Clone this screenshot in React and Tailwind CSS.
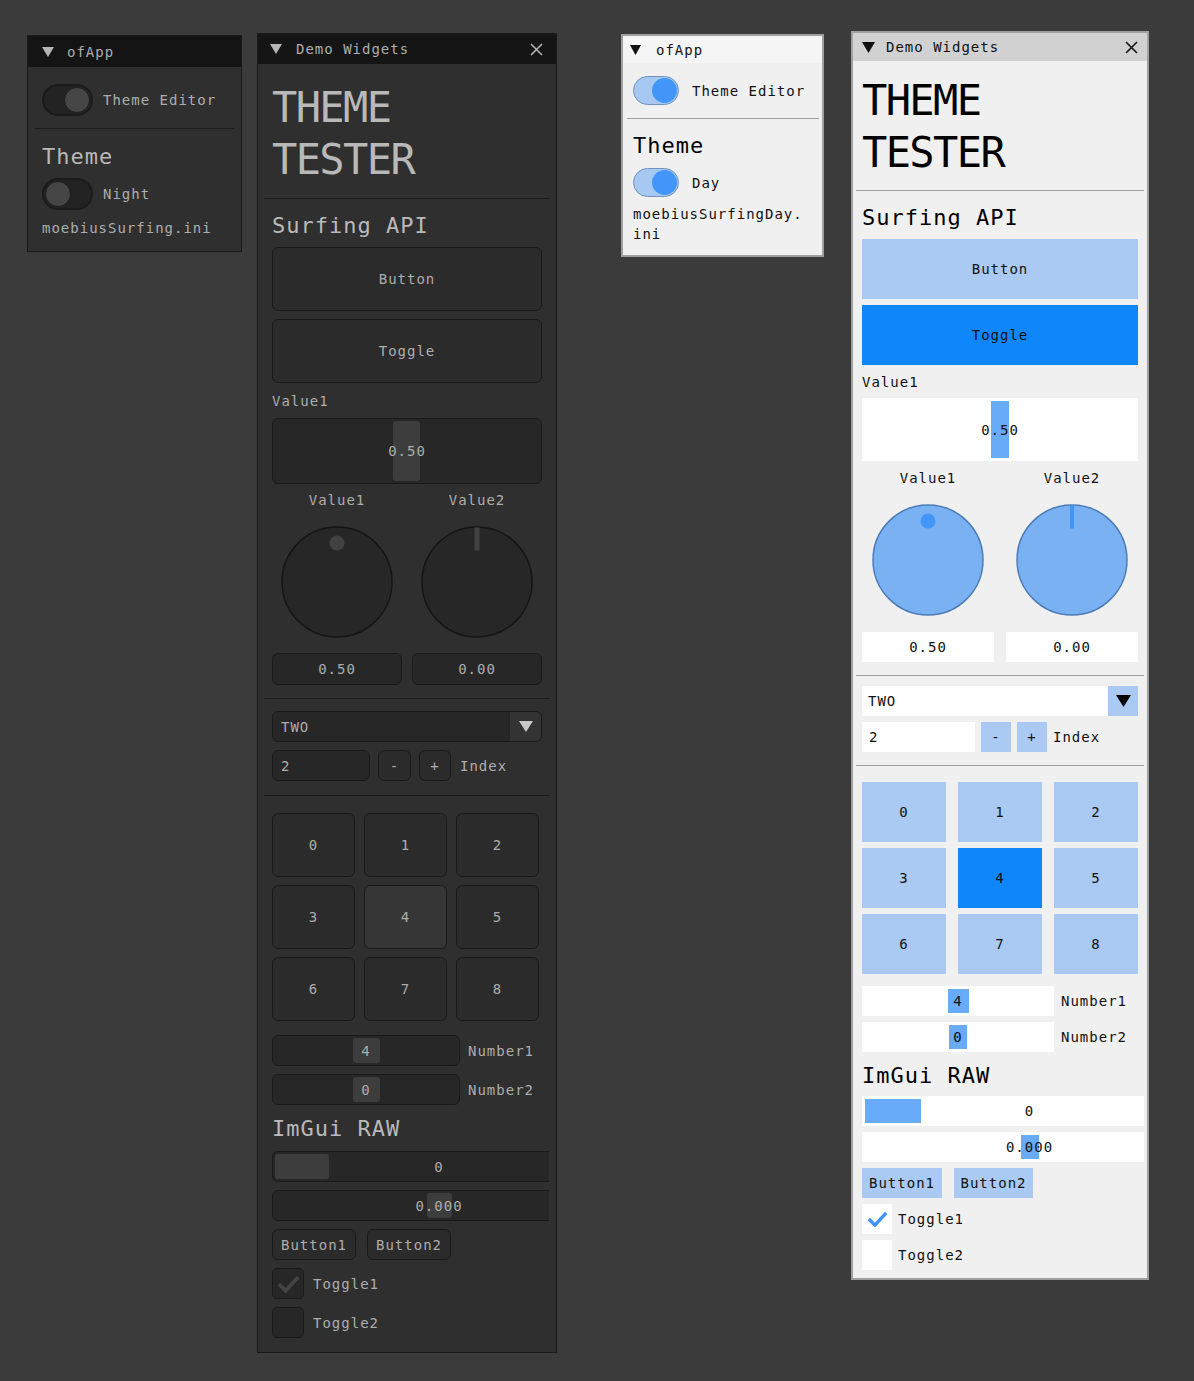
import React from "react";

const Tri = ({ w = 12, h = 10, color }) => (
  <svg width={w} height={h} viewBox="0 0 12 10" preserveAspectRatio="none" className="shrink-0">
    <path d="M0 0H12L6 10Z" fill={color} />
  </svg>
);

const CloseX = ({ color }) => (
  <svg width="13" height="13" viewBox="0 0 13 13" className="shrink-0">
    <path d="M1 1L12 12M12 1L1 12" stroke={color} strokeWidth="1.6" />
  </svg>
);

const Check = ({ color, w, h }) => (
  <svg width={w} height={h} viewBox="0 0 24 18">
    <path d="M2 9L9 16L22 2" fill="none" stroke={color} strokeWidth="4" />
  </svg>
);

const Knob = ({ t, kind }) => (
  <svg width="112" height="112" viewBox="0 0 112 112">
    <circle cx="56" cy="56" r="55" fill={t.knobFill} stroke={t.knobStroke} strokeWidth="1.5" />
    {kind === "dot" ? (
      <circle cx="56" cy="17" r="7.5" fill={t.knobMark} />
    ) : (
      <rect x={56 - t.lineW / 2} y="1.5" width={t.lineW} height="23" fill={t.knobMark} />
    )}
  </svg>
);

const dark = {
  win: "mt-[2px] ml-[15px] w-[300px] h-[1320px] border border-[#1a1a1a] bg-[#2f2f2f] text-[#adadad]",
  title: "h-[30px] bg-[#151515] pl-[12px] pr-[13px]",
  triW: 12,
  triH: 10,
  titleIcon: "#b4b4b4",
  titleGap: "ml-[14px]",
  body: "px-[14px]",
  head: "text-[#b9b9b9]",
  sep: "-mx-[8px] bg-[#1c1c1c]",
  btn: "bg-[#2b2b2b] border border-[#1a1a1a] rounded-[6px]",
  bigTog: "bg-[#2b2b2b] border border-[#1a1a1a] rounded-[6px]",
  cellOn: "bg-[#363636] border border-[#1a1a1a] rounded-[6px]",
  frame: "bg-[#272727] border border-[#1a1a1a] rounded-[6px]",
  grab: "bg-[#3d3d3d] rounded-[3px]",
  knobFill: "#272727",
  knobStroke: "#151515",
  knobMark: "#414141",
  lineW: 5,
  knobGap: "gap-x-[10px]",
  comboPl: "pl-[8px]",
  comboArrow: "w-[31px] bg-[#333333]",
  comboTri: { w: 14, h: 11, c: "#c8c8c8" },
  inputW: "w-[98px] pl-[8px]",
  minus: "ml-[8px] w-[33px]",
  plus: "ml-[8px] w-[32px]",
  indexMl: "ml-[9px]",
  grid: "grid-cols-[83px_83px_83px] gap-x-[9px] gap-y-[8px]",
  cellH: "h-[64px]",
  numW: "w-[188px]",
  numMl: "ml-[8px]",
  rawWrap: "w-[277px]",
  rawInner: "w-[334px]",
  b1: "w-[84px]",
  b2: "ml-[11px] w-[84px]",
  cb: "w-[32px] h-[31px] bg-[#272727] border border-[#1a1a1a] rounded-[5px]",
  cbMl: "ml-[9px]",
  check: { c: "#444444", w: 23, h: 18 },
  g: {
    value: "left-[120px] w-[27px] top-[2px] bottom-[2px]",
    num1: "left-[80px] w-[27px] top-[2px] bottom-[2px]",
    num2: "left-[80px] w-[27px] top-[2px] bottom-[2px]",
    raw1: "left-[2px] w-[54px] top-[2px] bottom-[2px]",
    raw2: "left-[154px] w-[25px] top-[2px] bottom-[2px]",
  },
  m: {
    title: "mt-[18px]",
    sep1: "mt-[12px]",
    surf: "mt-[14px]",
    bigBtn: "mt-[8px] h-[64px]",
    bigTog: "mt-[8px] h-[64px]",
    label: "mt-[9px]",
    slider: "mt-[8px] h-[66px]",
    knobLabels: "mt-[7px]",
    knobs: "mt-[17px]",
    valBoxes: "mt-[15px] h-[32px]",
    sep2: "mt-[13px]",
    combo: "mt-[12px] h-[31px]",
    inputRow: "mt-[8px] h-[31px]",
    sep3: "mt-[14px]",
    grid: "mt-[17px]",
    num1: "mt-[14px]",
    num2: "mt-[8px]",
    rowH: "h-[31px]",
    imgui: "mt-[11px]",
    raw1: "mt-[9px]",
    row: "mt-[8px]",
  },
};

const light = {
  win: "ml-[27px] w-[298px] h-[1249px] border-2 border-[#a0a0a0] bg-[#f0f0f0] text-[#111111]",
  title: "h-[28px] bg-[#d1d1d1] pl-[9px] pr-[9px]",
  triW: 13,
  triH: 11,
  titleIcon: "#111111",
  titleGap: "ml-[11px]",
  body: "px-[9px]",
  head: "text-black",
  sep: "-mx-[6px] bg-[#a0a0a0]",
  btn: "bg-[#aacaf3]",
  bigTog: "bg-[#0f87fa]",
  cellOn: "bg-[#0f87fa]",
  frame: "bg-white",
  grab: "bg-[#68abf8]",
  knobFill: "#79b1f3",
  knobStroke: "#4c7db6",
  knobMark: "#4296fa",
  lineW: 4,
  knobGap: "gap-x-[12px]",
  comboPl: "pl-[6px]",
  comboArrow: "w-[30px] bg-[#aacaf3]",
  comboTri: { w: 15, h: 12, c: "#000000" },
  inputW: "w-[113px] pl-[7px]",
  minus: "ml-[6px] w-[30px]",
  plus: "ml-[6px] w-[30px]",
  indexMl: "ml-[6px]",
  grid: "grid-cols-[84px_84px_84px] gap-x-[12px] gap-y-[6px]",
  cellH: "h-[60px]",
  numW: "w-[192px]",
  numMl: "ml-[7px]",
  rawWrap: "w-[282px]",
  rawInner: "w-[335px]",
  b1: "w-[80px]",
  b2: "ml-[12px] w-[79px]",
  cb: "w-[30px] h-[30px] bg-white",
  cbMl: "ml-[6px]",
  check: { c: "#4296fa", w: 21, h: 16 },
  g: {
    value: "left-[129px] w-[18px] top-[3px] bottom-[3px]",
    num1: "left-[86px] w-[21px] top-[3px] bottom-[3px]",
    num2: "left-[87px] w-[18px] top-[3px] bottom-[3px]",
    raw1: "left-[3px] w-[56px] top-[3px] bottom-[3px]",
    raw2: "left-[159px] w-[18px] top-[3px] bottom-[3px]",
  },
  m: {
    title: "mt-[14px]",
    sep1: "mt-[11px]",
    surf: "mt-[14px]",
    bigBtn: "mt-[8px] h-[60px]",
    bigTog: "mt-[6px] h-[60px]",
    label: "mt-[8px]",
    slider: "mt-[7px] h-[63px]",
    knobLabels: "mt-[8px]",
    knobs: "mt-[17px]",
    valBoxes: "mt-[16px] h-[30px]",
    sep2: "mt-[13px]",
    combo: "mt-[10px] h-[30px]",
    inputRow: "mt-[6px] h-[30px]",
    sep3: "mt-[13px]",
    grid: "mt-[16px]",
    num1: "mt-[12px]",
    num2: "mt-[6px]",
    rowH: "h-[30px]",
    imgui: "mt-[11px]",
    raw1: "mt-[7px]",
    row: "mt-[6px]",
  },
};

function SliderFrame({ t, cls, grab, children }) {
  return (
    <div className={`relative ${t.frame} ${cls}`}>
      <div className={`absolute ${t.grab} ${grab}`} />
      <div className="relative h-full flex items-center justify-center whitespace-nowrap">{children}</div>
    </div>
  );
}

function DemoWindow({ t }) {
  const m = t.m;
  return (
    <div className={`flex flex-col shrink-0 ${t.win}`}>
      <div className={`flex items-center shrink-0 ${t.title}`}>
        <Tri w={t.triW} h={t.triH} color={t.titleIcon} />
        <span className={`${t.titleGap} whitespace-nowrap`}>Demo Widgets</span>
        <span className="ml-auto flex">
          <CloseX color={t.titleIcon} />
        </span>
      </div>
      <div className={`flex flex-col ${t.body}`}>
        <div className={`text-[42px] leading-[52px] tracking-[-1.6px] ${t.head} ${m.title}`}>
          <div>THEME</div>
          <div>TESTER</div>
        </div>
        <div className={`h-px ${t.sep} ${m.sep1}`} />
        <div className={`text-[22px] leading-[26px] ${t.head} ${m.surf}`}>Surfing API</div>
        <div className={`flex items-center justify-center ${t.btn} ${m.bigBtn}`}>Button</div>
        <div className={`flex items-center justify-center ${t.bigTog} ${m.bigTog}`}>Toggle</div>
        <div className={m.label}>Value1</div>
        <SliderFrame t={t} cls={m.slider} grab={t.g.value}>0.50</SliderFrame>

        <div className={`grid grid-cols-2 ${t.knobGap} ${m.knobLabels}`}>
          <div className="text-center">Value1</div>
          <div className="text-center">Value2</div>
        </div>
        <div className={`grid grid-cols-2 ${t.knobGap} ${m.knobs}`}>
          <div className="flex justify-center">
            <Knob t={t} kind="dot" />
          </div>
          <div className="flex justify-center">
            <Knob t={t} kind="line" />
          </div>
        </div>
        <div className={`grid grid-cols-2 ${t.knobGap} ${m.valBoxes}`}>
          <div className={`flex items-center justify-center ${t.frame}`}>0.50</div>
          <div className={`flex items-center justify-center ${t.frame}`}>0.00</div>
        </div>

        <div className={`h-px ${t.sep} ${m.sep2}`} />

        <div className={`flex overflow-hidden ${t.frame} ${m.combo}`}>
          <div className={`flex-1 flex items-center ${t.comboPl}`}>TWO</div>
          <div className={`flex items-center justify-center ${t.comboArrow}`}>
            <Tri w={t.comboTri.w} h={t.comboTri.h} color={t.comboTri.c} />
          </div>
        </div>
        <div className={`flex items-center ${m.inputRow}`}>
          <div className={`h-full flex items-center ${t.frame} ${t.inputW}`}>2</div>
          <div className={`h-full flex items-center justify-center ${t.btn} ${t.minus}`}>-</div>
          <div className={`h-full flex items-center justify-center ${t.btn} ${t.plus}`}>+</div>
          <span className={t.indexMl}>Index</span>
        </div>

        <div className={`h-px ${t.sep} ${m.sep3}`} />

        <div className={`grid ${t.grid} ${m.grid}`}>
          {["0", "1", "2", "3", "4", "5", "6", "7", "8"].map((n) => (
            <div key={n} className={`flex items-center justify-center ${t.cellH} ${n === "4" ? t.cellOn : t.btn}`}>
              {n}
            </div>
          ))}
        </div>

        <div className={`flex items-center ${m.num1} ${m.rowH}`}>
          <SliderFrame t={t} cls={`h-full ${t.numW}`} grab={t.g.num1}>4</SliderFrame>
          <span className={t.numMl}>Number1</span>
        </div>
        <div className={`flex items-center ${m.num2} ${m.rowH}`}>
          <SliderFrame t={t} cls={`h-full ${t.numW}`} grab={t.g.num2}>0</SliderFrame>
          <span className={t.numMl}>Number2</span>
        </div>

        <div className={`text-[22px] leading-[26px] ${t.head} ${m.imgui}`}>ImGui RAW</div>

        <div className={`overflow-hidden shrink-0 ${t.rawWrap} ${m.raw1} ${m.rowH}`}>
          <SliderFrame t={t} cls={`h-full ${t.rawInner}`} grab={t.g.raw1}>0</SliderFrame>
        </div>
        <div className={`overflow-hidden shrink-0 ${t.rawWrap} ${m.row} ${m.rowH}`}>
          <SliderFrame t={t} cls={`h-full ${t.rawInner}`} grab={t.g.raw2}>0.000</SliderFrame>
        </div>

        <div className={`flex ${m.row} ${m.rowH}`}>
          <div className={`flex items-center justify-center ${t.btn} ${t.b1}`}>Button1</div>
          <div className={`flex items-center justify-center ${t.btn} ${t.b2}`}>Button2</div>
        </div>
        <div className={`flex items-center ${m.row}`}>
          <div className={`flex items-center justify-center ${t.cb}`}>
            <Check color={t.check.c} w={t.check.w} h={t.check.h} />
          </div>
          <span className={t.cbMl}>Toggle1</span>
        </div>
        <div className={`flex items-center ${m.row}`}>
          <div className={t.cb} />
          <span className={t.cbMl}>Toggle2</span>
        </div>
      </div>
    </div>
  );
}

function DarkSwitch({ on }) {
  return (
    <div
      className={`w-[51px] h-[32px] rounded-full bg-[#232323] border-2 border-[#1b1b1b] px-[1px] flex items-center shrink-0 ${
        on ? "justify-end" : "justify-start"
      }`}
    >
      <div className="w-[26px] h-[26px] rounded-full bg-[#464646] border border-[#1e1e1e]" />
    </div>
  );
}

function LightSwitch() {
  return (
    <div className="w-[46px] h-[29px] rounded-full bg-[#a7c8f1] border border-[#6f92bf] px-[1px] flex items-center justify-end shrink-0">
      <div className="w-[25px] h-[25px] rounded-full bg-[#4296fa]" />
    </div>
  );
}

function DarkOfApp() {
  return (
    <div className="mt-[4px] w-[215px] h-[217px] shrink-0 border border-[#1a1a1a] bg-[#2f2f2f] text-[#adadad] flex flex-col">
      <div className="h-[31px] bg-[#141414] flex items-center pl-[14px]">
        <Tri w={12} h={10} color="#b4b4b4" />
        <span className="ml-[13px]">ofApp</span>
      </div>
      <div className="px-[14px] flex flex-col">
        <div className="mt-[17px] flex items-center">
          <DarkSwitch on />
          <span className="ml-[10px] whitespace-nowrap">Theme Editor</span>
        </div>
        <div className="mt-[12px] -mx-[7px] h-px bg-[#1c1c1c]" />
        <div className="mt-[15px] text-[22px] leading-[26px] text-[#b9b9b9]">Theme</div>
        <div className="mt-[8px] flex items-center">
          <DarkSwitch on={false} />
          <span className="ml-[10px]">Night</span>
        </div>
        <div className="mt-[8px] leading-[20px] whitespace-nowrap">moebiusSurfing.ini</div>
      </div>
    </div>
  );
}

function LightOfApp() {
  return (
    <div className="mt-[3px] ml-[64px] w-[203px] h-[223px] shrink-0 border-2 border-[#a0a0a0] bg-[#f0f0f0] text-[#111111] flex flex-col">
      <div className="h-[27px] bg-[#f5f5f5] flex items-center pl-[7px]">
        <Tri w={11} h={10} color="#111111" />
        <span className="ml-[15px]">ofApp</span>
      </div>
      <div className="px-[10px] flex flex-col">
        <div className="mt-[13px] flex items-center">
          <LightSwitch />
          <span className="ml-[13px] whitespace-nowrap">Theme Editor</span>
        </div>
        <div className="mt-[13px] -ml-[6px] -mr-[7px] h-px bg-[#a0a0a0]" />
        <div className="mt-[14px] text-[22px] leading-[26px] text-black">Theme</div>
        <div className="mt-[9px] flex items-center">
          <LightSwitch />
          <span className="ml-[13px]">Day</span>
        </div>
        <div className="mt-[7px] leading-[20px] whitespace-nowrap">
          moebiusSurfingDay.
          <br />
          ini
        </div>
      </div>
    </div>
  );
}

export default function App() {
  return (
    <div className="min-h-screen w-full bg-[#3b3b3b] font-['DejaVu_Sans_Mono',monospace] text-[14px] tracking-[1px] leading-[18px]">
      <div className="flex items-start pt-[31px] pl-[27px]">
        <DarkOfApp />
        <DemoWindow t={dark} />
        <LightOfApp />
        <DemoWindow t={light} />
      </div>
    </div>
  );
}
